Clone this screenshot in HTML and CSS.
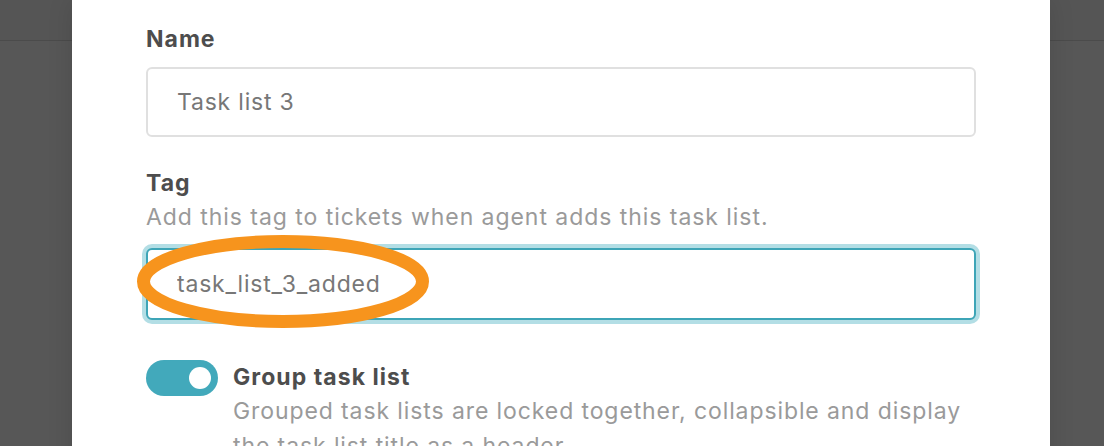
FILE: index.html
```html
<!DOCTYPE html>
<html lang="en">
<head>
<meta charset="utf-8">
<title>Edit task list</title>
<link rel="stylesheet" href="styles.css">
</head>
<body>
<div class="app-bar"></div>
<div class="modal">
  <div class="field">
    <label class="label" for="name">Name</label>
    <input class="input" id="name" type="text" value="Task list 3">
  </div>
  <div class="field field-tag">
    <label class="label" for="tag">Tag</label>
    <div class="hint">Add this tag to tickets when agent adds this task list.</div>
    <div class="input-wrap">
      <input class="input input-focus" id="tag" type="text" value="task_list_3_added">
      <svg class="callout" width="292" height="93" viewBox="0 0 292 93" aria-hidden="true">
        <ellipse cx="146" cy="46.5" rx="139.5" ry="40" fill="none" stroke="#f7941d" stroke-width="13"/>
      </svg>
    </div>
  </div>
  <div class="toggle-row">
    <span class="toggle"><span class="knob"></span></span>
    <div class="toggle-text">
      <div class="toggle-title">Group task list</div>
      <div class="hint">Grouped task lists are locked together, collapsible and display the task list title as a header.</div>
    </div>
  </div>
</div>
</body>
</html>
```

FILE: styles.css
```css
html, body {
  margin: 0;
  height: 100%;
}

body {
  background: #575757;
  overflow: hidden;
  font-family: "Inter", "Noto Sans", sans-serif;
  position: relative;
}

.app-bar {
  height: 40px;
  background: #555555;
  border-bottom: 1px solid #4b4b4b;
}

.modal {
  position: absolute;
  top: 0;
  left: 72px;
  width: 978px;
  min-height: 100%;
  box-sizing: border-box;
  padding: 22px 74px 40px;
  background: #ffffff;
  box-shadow: 0 0 24px rgba(0, 0, 0, 0.12);
}

.field {
  display: flex;
  flex-direction: column;
}

.field-tag {
  margin-top: 29px;
}

.label {
  font-size: 23px;
  line-height: 34px;
  font-weight: 700;
  letter-spacing: 1px;
  color: #4d4d4d;
}

.hint {
  font-size: 23px;
  line-height: 34px;
  letter-spacing: 0.95px;
  color: #9a9a9a;
}

.input {
  margin-top: 11px;
  height: 70px;
  box-sizing: border-box;
  border: 2px solid #e0e0e0;
  border-radius: 6px;
  padding: 0 20px 0 29px;
  font-family: "Inter", "Noto Sans", sans-serif;
  font-size: 23px;
  letter-spacing: 0.8px;
  color: #777777;
  background: #ffffff;
  outline: none;
  width: 100%;
}

.input-wrap {
  position: relative;
  margin-top: 14px;
}

.input-wrap .input {
  margin-top: 0;
  height: 72px;
}

.input-focus {
  border-color: #3ea5b7;
  box-shadow: 0 0 0 4px #b3dee5;
}

.callout {
  position: absolute;
  left: -9px;
  top: -13px;
  pointer-events: none;
}

.toggle-row {
  display: flex;
  align-items: flex-start;
  gap: 15px;
  margin-top: 40px;
}

.toggle {
  flex: none;
  width: 72px;
  height: 36px;
  border-radius: 18px;
  background: #42a9bb;
  display: flex;
  align-items: center;
  justify-content: flex-end;
  padding-right: 7px;
  box-sizing: border-box;
}

.knob {
  width: 22px;
  height: 22px;
  border-radius: 50%;
  background: #ffffff;
}

.toggle-text {
  display: flex;
  flex-direction: column;
}

.toggle-title {
  font-size: 23px;
  line-height: 34px;
  font-weight: 700;
  letter-spacing: 1.05px;
  color: #4d4d4d;
}

.toggle-text .hint {
  line-height: 35px;
  letter-spacing: 0.9px;
}
```
